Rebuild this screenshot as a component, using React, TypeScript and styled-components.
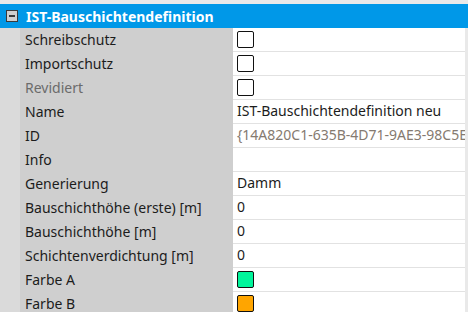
import styled, { createGlobalStyle } from "styled-components";

const GlobalStyle = createGlobalStyle`
  html, body {
    margin: 0;
    padding: 0;
    background: #ececec;
    overflow: hidden;
  }
  body {
    font-family: "Noto Sans", "Open Sans", sans-serif;
  }
`;

const Grid = styled.div`
  width: 468px;
  height: 312px;
  padding-top: 4px;
  box-sizing: border-box;
  background: #e9e9e9;
  overflow: hidden;
`;

const Header = styled.div`
  display: flex;
  align-items: center;
  height: 24px;
  background: #0098e8;
  color: #ffffff;
  font-size: 14px;
  font-weight: 700;
`;

const Toggle = styled.span`
  position: relative;
  width: 10px;
  height: 10px;
  margin: 0 8px 0 6px;
  background: #cfcfcf;
  border: 1px solid #3a3a3a;

  &::after {
    content: "";
    position: absolute;
    left: 2px;
    right: 2px;
    top: 4px;
    height: 2px;
    background: #3a3a3a;
  }
`;

const Row = styled.div`
  display: grid;
  grid-template-columns: 20px 213px 1fr;
  height: 24px;
  margin-right: 3px;
  font-size: 14px;
`;

const Gutter = styled.div`
  background: #dadada;
`;

const Label = styled.div<{ $disabled?: boolean }>`
  display: flex;
  align-items: center;
  padding: 0 0 2px 5px;
  background: #cfcfcf;
  color: ${(p) => (p.$disabled ? "#6b6b6b" : "#1c1c1c")};
  white-space: nowrap;
`;

const Value = styled.div<{ $muted?: boolean }>`
  display: flex;
  align-items: center;
  padding: 0 0 2px 4px;
  background: #ffffff;
  border-bottom: 1px solid #e2e2e2;
  color: ${(p) => (p.$muted ? "#857a70" : "#1c1c1c")};
  white-space: nowrap;
  overflow: hidden;
  text-overflow: clip;
`;

const Box = styled.span<{ $fill?: string }>`
  width: 15px;
  height: 15px;
  border: 1.5px solid #111111;
  border-radius: 2px;
  background: ${(p) => p.$fill ?? "#ffffff"};
  margin-top: 1px;
`;

type Prop = {
  label: string;
  value?: string;
  check?: boolean;
  color?: string;
  disabled?: boolean;
  muted?: boolean;
};

const props: Prop[] = [
  { label: "Schreibschutz", check: true },
  { label: "Importschutz", check: true },
  { label: "Revidiert", check: true, disabled: true },
  { label: "Name", value: "IST-Bauschichtendefinition neu" },
  { label: "ID", value: "{14A820C1-635B-4D71-9AE3-98C5E2B7F041}", muted: true },
  { label: "Info", value: "" },
  { label: "Generierung", value: "Damm" },
  { label: "Bauschichthöhe (erste) [m]", value: "0" },
  { label: "Bauschichthöhe [m]", value: "0" },
  { label: "Schichtenverdichtung [m]", value: "0" },
  { label: "Farbe A", color: "#00f59b" },
  { label: "Farbe B", color: "#ffa500" },
];

export default function App() {
  return (
    <>
      <GlobalStyle />
      <Grid>
        <Header>
          <Toggle />
          IST-Bauschichtendefinition
        </Header>
        {props.map((p) => (
          <Row key={p.label}>
            <Gutter />
            <Label $disabled={p.disabled}>{p.label}</Label>
            <Value $muted={p.muted}>
              {p.check && <Box />}
              {p.color && <Box $fill={p.color} />}
              {p.value}
            </Value>
          </Row>
        ))}
      </Grid>
    </>
  );
}
